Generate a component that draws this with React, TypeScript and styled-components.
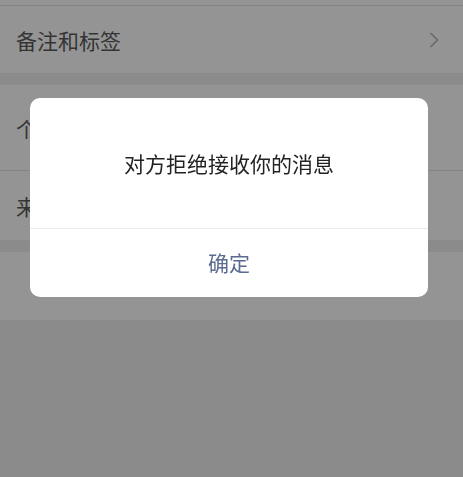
import React from "react";
import styled, { createGlobalStyle } from "styled-components";

const GlobalStyle = createGlobalStyle`
  html, body {
    margin: 0;
    padding: 0;
    background: #f0eff2;
    font-family: "Noto Sans CJK SC", "Noto Sans", sans-serif;
  }
  #root {
    height: 477px;
    overflow: hidden;
  }
`;

const Page = styled.div`
  display: flex;
  flex-direction: column;
  height: 477px;
  background: #f0eff2;
`;

const Group = styled.div<{ $gap?: number }>`
  display: flex;
  flex-direction: column;
  background: #ffffff;
  margin-top: ${(p) => p.$gap ?? 0}px;
`;

const Row = styled.div<{ $height: number; $divider?: boolean }>`
  display: flex;
  align-items: center;
  height: ${(p) => p.$height}px;
  padding: 0 24px 0 16px;
  border-bottom: ${(p) => (p.$divider ? "1px solid #e6e6e6" : "none")};
  box-sizing: border-box;
`;

const Label = styled.span`
  flex: 1;
  font-size: 21px;
  line-height: 24px;
  color: #5a5a5a;
`;

const Chevron = styled.svg`
  width: 10px;
  height: 16px;
  flex: none;
`;

const Overlay = styled.div`
  position: fixed;
  inset: 0;
  background: rgba(0, 0, 0, 0.42);
  display: flex;
  align-items: flex-start;
  padding: 98px 35px 0 30px;
`;

const Dialog = styled.div`
  flex: 1;
  display: flex;
  flex-direction: column;
  background: #ffffff;
  border-radius: 10px;
  overflow: hidden;
`;

const Message = styled.div`
  height: 130px;
  display: flex;
  align-items: center;
  justify-content: center;
  font-size: 21px;
  line-height: 24px;
  color: #222222;
  border-bottom: 1px solid #ececec;
`;

const ActionButton = styled.button`
  height: 68px;
  border: none;
  background: transparent;
  font-family: inherit;
  font-size: 21px;
  line-height: 24px;
  color: #5b6a90;
  padding: 0 0 2px;
  cursor: pointer;
`;

const ArrowRight = () => (
  <Chevron viewBox="0 0 10 16">
    <path
      d="M2 1.5 L8.5 8 L2 14.5"
      fill="none"
      stroke="#b4b4b4"
      strokeWidth="1.6"
      strokeLinecap="round"
      strokeLinejoin="round"
    />
  </Chevron>
);

export default function App() {
  return (
    <>
      <GlobalStyle />
      <Page>
        <Group>
          <Row $height={6} $divider />
          <Row $height={67}>
            <Label>备注和标签</Label>
            <ArrowRight />
          </Row>
        </Group>
        <Group $gap={12}>
          <Row $height={86} $divider>
            <Label>个人相册</Label>
          </Row>
          <Row $height={69}>
            <Label>来源</Label>
          </Row>
        </Group>
        <Group $gap={12}>
          <Row $height={68} />
        </Group>
      </Page>
      <Overlay>
        <Dialog>
          <Message>对方拒绝接收你的消息</Message>
          <ActionButton>确定</ActionButton>
        </Dialog>
      </Overlay>
    </>
  );
}
